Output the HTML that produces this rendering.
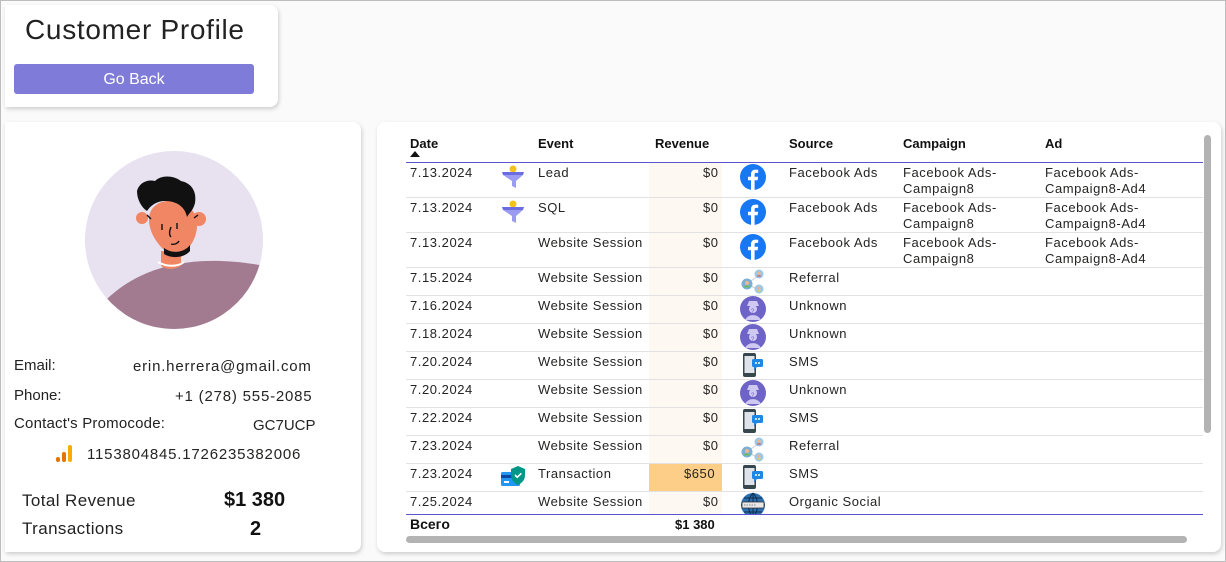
<!DOCTYPE html>
<html><head><meta charset="utf-8"><style>
*{margin:0;padding:0;box-sizing:border-box}
body{width:1226px;height:562px;background:#fafafa;font-family:"Liberation Sans",sans-serif;color:#222;position:relative;overflow:hidden}
.a{position:absolute;white-space:nowrap}
.card{position:absolute;background:#fff;border-radius:8px;box-shadow:1px 2px 4px rgba(0,0,0,.18)}
.t{font-size:13px;color:#252423;letter-spacing:.55px}
.h{font-size:13px;font-weight:bold;color:#111}
.ln{position:absolute;left:406px;width:797px;height:1px;background:#e2e2e2}
svg.i{position:absolute}
</style></head><body>
<div class="a" style="left:0;top:0;width:1226px;height:562px;border:1px solid #bdbdbd"></div>
<svg width="0" height="0" style="position:absolute">
<defs>
<symbol id="fb" viewBox="0 0 26 26"><circle cx="13" cy="13" r="13" fill="#1877f2"/><path d="M14.6 26V16.3h3l.5-3.5h-3.5v-2.2c0-1 .3-1.7 1.8-1.7h1.8V5.8c-.3 0-1.4-.2-2.7-.2-2.7 0-4.5 1.6-4.5 4.6v2.6H8v3.5h3V26z" fill="#fff"/></symbol>
<symbol id="fn" viewBox="0 0 26 26"><circle cx="13" cy="5" r="3.5" fill="#f4c020"/><path d="M2 8h22l-1 3H3z" fill="#6a6ce0"/><path d="M3 11h20l-7 6v7l-4-2v-5z" fill="#9a9cf2"/></symbol>
<symbol id="ref" viewBox="0 0 26 26"><path d="M7 16L19 7M7 16L19 22" stroke="#ccc" stroke-width="1"/><circle cx="7" cy="16" r="5.5" fill="#7ab0d8"/><circle cx="7" cy="15" r="2" fill="#f2b48a"/><path d="M3.5 19.5a4 4 0 0 1 7 0" fill="#6aba6a"/><circle cx="19" cy="6" r="4.5" fill="#9ac8e8"/><circle cx="19" cy="5" r="1.6" fill="#f2b48a"/><path d="M16.5 8.5a3 3 0 0 1 5 0" fill="#e05050"/><circle cx="19" cy="21" r="4.5" fill="#9ac8e8"/><circle cx="19" cy="20" r="1.6" fill="#f2b48a"/><path d="M16.5 23.5a3 3 0 0 1 5 0" fill="#f0d040"/></symbol>
<symbol id="unk" viewBox="0 0 26 26"><circle cx="13" cy="13" r="13" fill="#6e64c8"/><path d="M7 10h12l-2-5H9z" fill="#cfc8f0"/><circle cx="13" cy="13" r="4" fill="#cfc8f0"/><path d="M5 24a9 9 0 0 1 16 0z" fill="#cfc8f0"/><text x="11" y="17" font-size="6" fill="#6e64c8" font-family="Liberation Sans">?</text></symbol>
<symbol id="sms" viewBox="0 0 26 26"><rect x="3" y="1" width="13" height="24" rx="2" fill="#37474f"/><rect x="4.5" y="4" width="10" height="17" fill="#dde3e8"/><rect x="12" y="7" width="11" height="8" rx="1.5" fill="#1e88e5"/><path d="M14 15l0 3 3-3z" fill="#1e88e5"/><circle cx="16" cy="11" r="1" fill="#fff"/><circle cx="19" cy="11" r="1" fill="#fff"/></symbol>
<symbol id="glob" viewBox="0 0 26 26"><circle cx="13" cy="13" r="12" fill="#2c6fb0"/><path d="M1 13h24M13 1v24M4 6h18M4 20h18M13 1c-6 6-6 18 0 24M13 1c6 6 6 18 0 24" stroke="#0d2d4d" stroke-width="1" fill="none"/><rect x="2" y="10" width="22" height="6" rx="1" fill="#e8e8e8" stroke="#333" stroke-width=".8"/><path d="M4 13h12" stroke="#888" stroke-dasharray="1.5 1"/></symbol>
<symbol id="tx" viewBox="0 0 26 26"><rect x="1" y="8" width="19" height="14" rx="1.5" fill="#2196f3"/><rect x="1" y="11" width="19" height="3" fill="#0d47a1"/><rect x="4" y="17" width="5" height="2" fill="#fff"/><path d="M18 2l7 3v6c0 5-3 8-7 10-4-2-7-5-7-10V5z" fill="#009688"/><path d="M15 11l2.3 2.3 4-4" stroke="#fff" stroke-width="1.6" fill="none"/></symbol>
</defs></svg>

<div class="card" style="left:5px;top:5px;width:273px;height:102px;border-radius:0 8px 8px 0"></div>
<div class="a" style="left:25px;top:14px;font-size:28px;color:#222;letter-spacing:.7px">Customer Profile</div>
<div class="a" style="left:14px;top:64px;width:240px;height:30px;background:#7f7bd9;border-radius:3px;color:#fff;font-size:16px;text-align:center;line-height:31px">Go Back</div>

<div class="card" style="left:5px;top:122px;width:356px;height:430px;border-radius:0 8px 8px 0"></div>
<svg class="i" style="left:85px;top:151px" width="178" height="178" viewBox="0 0 178 178">
<defs><clipPath id="cc"><circle cx="89" cy="89" r="89"/></clipPath></defs>
<circle cx="89" cy="89" r="89" fill="#e7e1f0"/>
<g clip-path="url(#cc)">
<path d="M20 150C50 120 100 100 180 115L200 200H0z" fill="#a27b90"/>
<path d="M76 100l20 0 0 15c-8 4-14 4-20 0z" fill="#f08664"/>
<path d="M73 111c8 5 20 5 26 0" stroke="#fff" stroke-width="2" fill="none"/>
</g>
<path d="M64 68c0-10 8-18 20-18s26 6 28 20c1 12-4 24-12 30-8 5-18 3-24-4-6-7-12-16-12-28z" fill="#f08664"/>
<circle cx="57" cy="67" r="6" fill="#f08664"/><circle cx="114" cy="68" r="7" fill="#f08664"/>
<path d="M79 97c8 6 20 5 26-3l0 6c-6 7-18 8-26 3z" fill="#111"/>
<path d="M52 40c2-8 10-12 18-10 6-6 18-6 26 0 10 2 16 10 14 22-2 8-6 10-8 14-2-10-10-16-22-16-8 0-14 4-18 10-6-4-10-12-10-20z" fill="#111"/>
<path d="M77 73v6M92 72v6M86 76c-2 5-2 8 0 10M86 93c4 1 7-1 8-3M62 64l4 4M113 64l-4 3" stroke="#111" stroke-width="1.4" fill="none"/>
</svg>

<div class="a" style="left:14px;top:357px;font-size:15px">Email:</div>
<div class="a" style="left:133px;top:358px;font-size:15px;color:#252423;letter-spacing:.8px">erin.herrera@gmail.com</div>
<div class="a" style="left:14px;top:387px;font-size:15px">Phone:</div>
<div class="a" style="left:175px;top:388px;font-size:15px;color:#252423;letter-spacing:.8px">+1 (278) 555-2085</div>
<div class="a" style="left:14px;top:415px;font-size:15px;letter-spacing:.2px">Contact's Promocode:</div>
<div class="a" style="left:253px;top:417px;font-size:15px;color:#252423">GC7UCP</div>
<svg class="i" style="left:55px;top:444px" width="18" height="20"><rect x="1" y="13" width="4" height="5" rx="2" fill="#e37400"/><rect x="7" y="8" width="4" height="10" rx="2" fill="#e37400"/><rect x="13" y="1" width="4" height="17" rx="2" fill="#f9ab00"/></svg>
<div class="a" style="left:87px;top:446px;font-size:15px;color:#252423;letter-spacing:.8px">1153804845.1726235382006</div>
<div class="a" style="left:22px;top:491px;font-size:17px;color:#222;letter-spacing:.4px">Total Revenue</div>
<div class="a" style="left:224px;top:489px;font-size:20px;font-weight:bold;color:#111">$1 380</div>
<div class="a" style="left:22px;top:519px;font-size:17px;color:#222;letter-spacing:.4px">Transactions</div>
<div class="a" style="left:250px;top:518px;font-size:20px;font-weight:bold;color:#111">2</div>

<div class="card" style="left:377px;top:122px;width:844px;height:430px"></div>
<div class="a" style="left:649px;top:163px;width:73px;height:351px;background:#fdf8f1"></div>
<div class="a" style="left:649px;top:464px;width:73px;height:27px;background:#fcce88"></div>

<div class="a h" style="left:410px;top:136px">Date</div>
<div class="a" style="left:410px;top:151px;width:0;height:0;border-left:5px solid transparent;border-right:5px solid transparent;border-bottom:6px solid #111"></div>
<div class="a h" style="left:538px;top:136px">Event</div>
<div class="a h" style="left:655px;top:136px">Revenue</div>
<div class="a h" style="left:789px;top:136px">Source</div>
<div class="a h" style="left:903px;top:136px">Campaign</div>
<div class="a h" style="left:1045px;top:136px">Ad</div>
<div class="a" style="left:406px;top:162px;width:797px;height:1px;background:#5a54d0"></div>

<div class="ln" style="top:197px"></div><div class="ln" style="top:232px"></div><div class="ln" style="top:267px"></div><div class="ln" style="top:295px"></div><div class="ln" style="top:323px"></div><div class="ln" style="top:351px"></div><div class="ln" style="top:379px"></div><div class="ln" style="top:407px"></div><div class="ln" style="top:435px"></div><div class="ln" style="top:463px"></div><div class="ln" style="top:491px"></div>
<div class="a" style="left:406px;top:514px;width:797px;height:1px;background:#5a54d0"></div>

<div class="a t" style="left:410px;top:165px">7.13.2024</div><svg class="i" style="left:500px;top:164px" width="26" height="26"><use href="#fn"/></svg><div class="a t" style="left:538px;top:165px">Lead</div><div class="a t" style="left:703px;top:165px">$0</div><svg class="i" style="left:740px;top:164px" width="26" height="26"><use href="#fb"/></svg><div class="a t" style="left:789px;top:165px">Facebook Ads</div><div class="a t" style="left:903px;top:165px;line-height:16px">Facebook Ads-<br>Campaign8</div><div class="a t" style="left:1045px;top:165px;line-height:16px">Facebook Ads-<br>Campaign8-Ad4</div>

<div class="a t" style="left:410px;top:200px">7.13.2024</div><svg class="i" style="left:500px;top:199px" width="26" height="26"><use href="#fn"/></svg><div class="a t" style="left:538px;top:200px">SQL</div><div class="a t" style="left:703px;top:200px">$0</div><svg class="i" style="left:740px;top:199px" width="26" height="26"><use href="#fb"/></svg><div class="a t" style="left:789px;top:200px">Facebook Ads</div><div class="a t" style="left:903px;top:200px;line-height:16px">Facebook Ads-<br>Campaign8</div><div class="a t" style="left:1045px;top:200px;line-height:16px">Facebook Ads-<br>Campaign8-Ad4</div>

<div class="a t" style="left:410px;top:235px">7.13.2024</div><div class="a t" style="left:538px;top:235px">Website Session</div><div class="a t" style="left:703px;top:235px">$0</div><svg class="i" style="left:740px;top:234px" width="26" height="26"><use href="#fb"/></svg><div class="a t" style="left:789px;top:235px">Facebook Ads</div><div class="a t" style="left:903px;top:235px;line-height:16px">Facebook Ads-<br>Campaign8</div><div class="a t" style="left:1045px;top:235px;line-height:16px">Facebook Ads-<br>Campaign8-Ad4</div>

<div class="a t" style="left:410px;top:270px">7.15.2024</div><div class="a t" style="left:538px;top:270px">Website Session</div><div class="a t" style="left:703px;top:270px">$0</div><svg class="i" style="left:740px;top:268px" width="26" height="26"><use href="#ref"/></svg><div class="a t" style="left:789px;top:270px">Referral</div>
<div class="a t" style="left:410px;top:298px">7.16.2024</div><div class="a t" style="left:538px;top:298px">Website Session</div><div class="a t" style="left:703px;top:298px">$0</div><svg class="i" style="left:740px;top:296px" width="26" height="26"><use href="#unk"/></svg><div class="a t" style="left:789px;top:298px">Unknown</div>
<div class="a t" style="left:410px;top:326px">7.18.2024</div><div class="a t" style="left:538px;top:326px">Website Session</div><div class="a t" style="left:703px;top:326px">$0</div><svg class="i" style="left:740px;top:324px" width="26" height="26"><use href="#unk"/></svg><div class="a t" style="left:789px;top:326px">Unknown</div>
<div class="a t" style="left:410px;top:354px">7.20.2024</div><div class="a t" style="left:538px;top:354px">Website Session</div><div class="a t" style="left:703px;top:354px">$0</div><svg class="i" style="left:740px;top:352px" width="26" height="26"><use href="#sms"/></svg><div class="a t" style="left:789px;top:354px">SMS</div>
<div class="a t" style="left:410px;top:382px">7.20.2024</div><div class="a t" style="left:538px;top:382px">Website Session</div><div class="a t" style="left:703px;top:382px">$0</div><svg class="i" style="left:740px;top:380px" width="26" height="26"><use href="#unk"/></svg><div class="a t" style="left:789px;top:382px">Unknown</div>
<div class="a t" style="left:410px;top:410px">7.22.2024</div><div class="a t" style="left:538px;top:410px">Website Session</div><div class="a t" style="left:703px;top:410px">$0</div><svg class="i" style="left:740px;top:408px" width="26" height="26"><use href="#sms"/></svg><div class="a t" style="left:789px;top:410px">SMS</div>
<div class="a t" style="left:410px;top:438px">7.23.2024</div><div class="a t" style="left:538px;top:438px">Website Session</div><div class="a t" style="left:703px;top:438px">$0</div><svg class="i" style="left:740px;top:436px" width="26" height="26"><use href="#ref"/></svg><div class="a t" style="left:789px;top:438px">Referral</div>
<div class="a t" style="left:410px;top:466px">7.23.2024</div><svg class="i" style="left:500px;top:464px" width="26" height="26"><use href="#tx"/></svg><div class="a t" style="left:538px;top:466px">Transaction</div><div class="a t" style="left:684px;top:466px">$650</div><svg class="i" style="left:740px;top:464px" width="26" height="26"><use href="#sms"/></svg><div class="a t" style="left:789px;top:466px">SMS</div>
<div class="a t" style="left:410px;top:494px">7.25.2024</div><div class="a t" style="left:538px;top:494px">Website Session</div><div class="a t" style="left:703px;top:494px">$0</div><div class="a" style="left:740px;top:492px;width:26px;height:22px;overflow:hidden"><svg width="26" height="26"><use href="#glob"/></svg></div><div class="a t" style="left:789px;top:494px">Organic Social</div>

<div class="a" style="left:410px;top:516px;font-size:14px;font-weight:bold;color:#111">Всего</div>
<div class="a" style="left:675px;top:517px;font-size:13px;font-weight:bold;color:#111">$1 380</div>

<div class="a" style="left:1204px;top:135px;width:7px;height:298px;background:#b3b3b3;border-radius:4px"></div>
<div class="a" style="left:406px;top:536px;width:781px;height:7px;background:#b3b3b3;border-radius:4px"></div>
</body></html>
